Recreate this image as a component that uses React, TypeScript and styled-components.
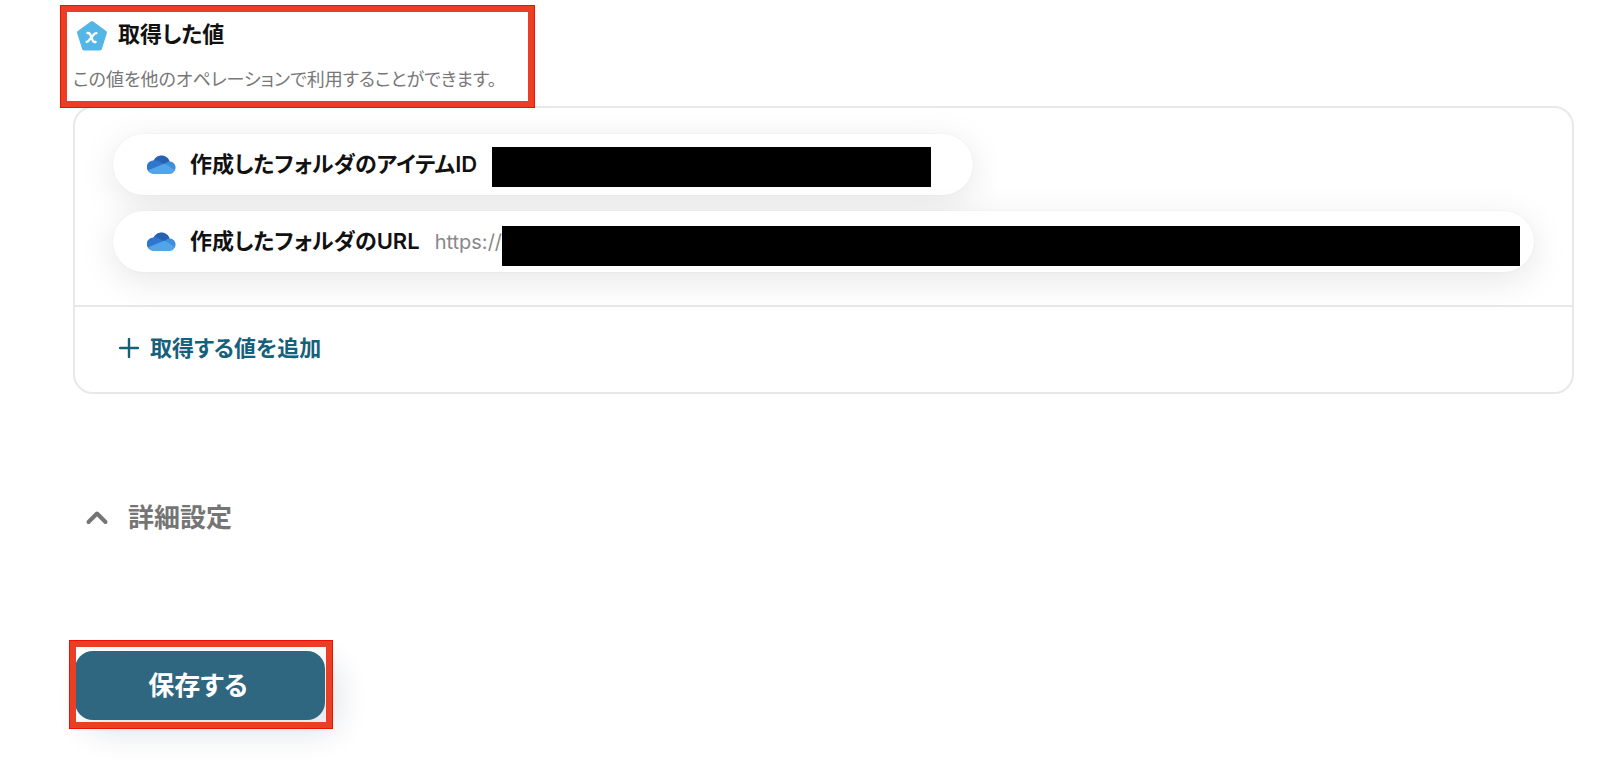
import React from "react";
import styled, { createGlobalStyle } from "styled-components";

const GlobalStyle = createGlobalStyle`
  *, *::before, *::after { box-sizing: border-box; }
  body {
    margin: 0;
    background: #fff;
    color: #111;
    font-family: Inter, "Noto Sans CJK JP", sans-serif;
    font-feature-settings: "palt";
  }
  button { font: inherit; font-feature-settings: inherit; border: 0; cursor: pointer; }
`;

const Page = styled.main`
  padding: 12px 26px 42px 73px;
`;

/* Red marker drawn over the block that it points out. */
const Highlight = styled.span<{ $inset: string }>`
  position: absolute;
  z-index: 1;
  inset: ${(p) => p.$inset};
  border: 7px solid #eb3f25;
  outline: 1px solid #f01000;
  outline-offset: -1px;
  pointer-events: none;
`;

const Header = styled.header`
  position: relative;
  width: fit-content;
  height: 94px;
`;

const TitleRow = styled.div`
  display: flex;
  align-items: center;
  gap: 10px;
  padding-left: 3px;
  height: 46px;
`;

const Title = styled.h2`
  margin: 0;
  padding-bottom: 2px;
  font-size: 22px;
  line-height: 44px;
  font-weight: 600;
`;

const Note = styled.p`
  margin: 6px 0 0;
  padding-right: 38px;
  font-size: 18px;
  line-height: 32px;
  color: #777;
`;

const Card = styled.section`
  border: 2px solid #e8e8e8;
  border-radius: 20px;
`;

const ValueList = styled.ul`
  display: flex;
  flex-direction: column;
  align-items: flex-start;
  gap: 16px;
  margin: 0;
  padding: 26px 38px 33px;
  list-style: none;
`;

const Pill = styled.li<{ $wide?: boolean }>`
  display: flex;
  align-items: center;
  width: ${(p) => (p.$wide ? "100%" : "fit-content")};
  height: 61px;
  padding: 0 ${(p) => (p.$wide ? 14 : 42)}px 0 34px;
  border-radius: 31px;
  background: #fff;
  box-shadow: 0 8px 36px rgba(0, 0, 0, 0.1), 0 0 2px rgba(0, 0, 0, 0.06);
`;

const PillLabel = styled.span`
  margin: 0 15px 0 14px;
  padding-bottom: 2px;
  font-size: 22px;
  line-height: 32px;
  font-weight: 600;
  white-space: nowrap;
`;

const PillValue = styled.span`
  font-size: 20px;
  line-height: 32px;
  color: #888;
`;

const Redaction = styled.span<{ $fill?: boolean }>`
  flex: ${(p) => (p.$fill ? "1" : "0 0 439px")};
  height: 40px;
  margin-top: ${(p) => (p.$fill ? 8 : 4)}px;
  background: #000;
`;

const CardFooter = styled.div`
  padding: 18px 38px 21px;
  border-top: 2px solid #e8e8e8;
`;

const ActionLabel = styled.span`
  padding-bottom: 4px;
`;

const AddButton = styled.button`
  display: flex;
  align-items: center;
  gap: 11px;
  padding: 0 6px;
  height: 46px;
  background: none;
  color: #15607a;
  && { font-size: 22px; font-weight: 600; }
`;

const DetailsButton = styled.button`
  display: flex;
  align-items: center;
  gap: 17px;
  height: 48px;
  margin-top: 99px;
  padding: 0 10px;
  background: none;
  color: #757575;
  && { font-size: 26px; font-weight: 600; }
`;

const SaveArea = styled.div`
  position: relative;
  width: fit-content;
  margin: 110px 0 0 2px;
`;

const SaveButton = styled.button`
  display: block;
  width: 250px;
  height: 69px;
  padding: 0 4px 4px 0;
  border-radius: 18px;
  background: #2f6780;
  color: #fff;
  box-shadow: 12px 12px 32px rgba(20, 40, 70, 0.14);
  && { font-size: 26px; font-weight: 600; }
`;

const ValueIcon = () => (
  <svg width="32" height="32" viewBox="0 0 32 32" aria-hidden="true">
    <path
      d="M16 4 29 13.500 24 29.500H8L3 13.500Z"
      fill="#52b6e6"
      stroke="#52b6e6"
      strokeWidth="4"
      strokeLinejoin="round"
    />
    <g fill="none" stroke="#fff" strokeWidth="2.300" strokeLinecap="round">
      <path d="M11.400 14h.8c1 0 1.500.4 2 1.500l2.500 6c.5 1.100 1 1.500 2 1.500h.9" />
      <path d="M20.400 14.200c-1.100 0-1.800.4-2.600 1.300l-5 6c-.8.9-1.300 1.300-2.200 1.300" />
    </g>
  </svg>
);

const CloudIcon = () => (
  <svg width="29" height="20" viewBox="0 0 29 20" aria-hidden="true">
    <path d="M6 7C7.500 2.500 11 .5 14.500.5c4 0 7 2.500 8.200 6L17 12Z" fill="#2661b3" />
    <path d="M6.500 5.500c2-.4 4 0 5.500.9l9 5.100L6 18.500a6.500 6.500 0 0 1 .5-13Z" fill="#2f76cf" />
    <path d="M17.500 9.500c1.500-2.400 3.500-3.200 5.500-3.100a6.200 6.200 0 0 1 4.500 9.600Z" fill="#3f8edb" />
    <path
      d="M1.300 15.200 17.500 8.600l10.300 6.300c-.8 2.700-2.700 4.100-5.300 4.100H7c-2.500 0-4.600-1.400-5.700-3.800Z"
      fill="#52a5e6"
    />
  </svg>
);

const PlusIcon = () => (
  <svg width="20" height="20" viewBox="0 0 20 20" aria-hidden="true">
    <path d="M10 1v18M1 10h18" stroke="currentColor" strokeWidth="2.400" strokeLinecap="round" />
  </svg>
);

const ChevronIcon = () => (
  <svg width="28" height="28" viewBox="0 0 28 28" aria-hidden="true">
    <path
      d="m5.500 19 8.500-8.500 8.500 8.500"
      fill="none"
      stroke="currentColor"
      strokeWidth="4"
      strokeLinecap="round"
      strokeLinejoin="round"
    />
  </svg>
);

export default function App() {
  return (
    <>
      <GlobalStyle />
      <Page>
        <Header>
          <TitleRow>
            <ValueIcon />
            <Title>取得した値</Title>
          </TitleRow>
          <Note>この値を他のオペレーションで利用することができます。</Note>
          <Highlight $inset="-7px 0 -2px -13px" />
        </Header>
        <Card>
          <ValueList>
            <Pill>
              <CloudIcon />
              <PillLabel>作成したフォルダのアイテムID</PillLabel>
              <Redaction />
            </Pill>
            <Pill $wide>
              <CloudIcon />
              <PillLabel>作成したフォルダのURL</PillLabel>
              <PillValue>https://</PillValue>
              <Redaction $fill />
            </Pill>
          </ValueList>
          <CardFooter>
            <AddButton type="button">
              <PlusIcon />
              <ActionLabel>取得する値を追加</ActionLabel>
            </AddButton>
          </CardFooter>
        </Card>
        <DetailsButton type="button" aria-expanded="true">
          <ChevronIcon />
          <ActionLabel>詳細設定</ActionLabel>
        </DetailsButton>
        <SaveArea>
          <SaveButton type="button">保存する</SaveButton>
          <Highlight $inset="-11px -8px -9px -6px" />
        </SaveArea>
      </Page>
    </>
  );
}
